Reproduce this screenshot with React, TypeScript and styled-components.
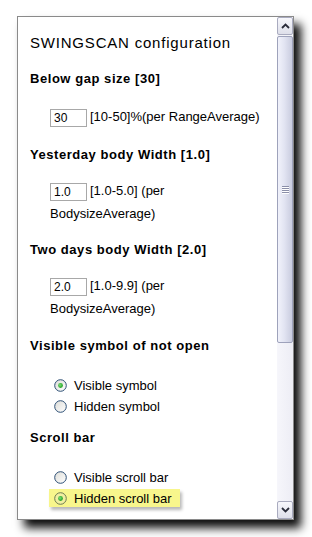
import React from "react";
import styled, { createGlobalStyle } from "styled-components";

const Global = createGlobalStyle`
  html, body { margin: 0; padding: 0; background: #fff; }
  body { font-family: "Liberation Sans", Arial, sans-serif; color: #000; }
`;

const Page = styled.div`
  width: 312px;
  height: 537px;
  box-sizing: border-box;
  padding: 16px 0 0 17px;
  background: #fff;
  overflow: hidden;
`;

const Frame = styled.div`
  width: 277px;
  height: 504px;
  box-sizing: border-box;
  border: 1px solid #8a8a8a;
  background: #fff;
  display: flex;
  box-shadow: 7px 8px 9px rgba(0, 0, 0, 0.95);
`;

const Content = styled.div`
  flex: 1;
  min-width: 0;
  padding: 16px 0 0 12px;
  overflow: hidden;
`;

const Title = styled.div`
  font-size: 15px;
  line-height: 20px;
  letter-spacing: 0.8px;
  white-space: nowrap;
`;

const Section = styled.section<{ $top: number }>`
  margin-top: ${(p) => p.$top}px;
`;

const Heading = styled.div`
  font-size: 13px;
  font-weight: bold;
  line-height: 20px;
  letter-spacing: 0.55px;
  white-space: nowrap;
`;

const Body = styled.div<{ $gap: number }>`
  margin-top: ${(p) => p.$gap}px;
`;

const InputText = styled.div`
  padding-left: 20px;
  font-size: 13px;
  line-height: 23px;
  white-space: nowrap;
`;

const Field = styled.input`
  width: 37px;
  height: 18px;
  box-sizing: border-box;
  border: 1px solid #a8a8a8;
  padding: 0 0 0 3px;
  margin: 0 3px 0 0;
  font: 12px "Liberation Sans", Arial, sans-serif;
  color: #000;
  vertical-align: middle;
  outline: none;
`;

const Options = styled.div`
  display: flex;
  flex-direction: column;
  align-items: flex-start;
  gap: 3px;
  padding-left: 19px;
`;

const Option = styled.label<{ $highlight?: boolean }>`
  display: inline-flex;
  align-items: center;
  gap: 7px;
  height: 18px;
  padding: 0 8px 0 5px;
  font-size: 13px;
  white-space: nowrap;
  background: ${(p) => (p.$highlight ? "#f8f68c" : "transparent")};
  box-shadow: ${(p) =>
    p.$highlight ? "2px 3px 3px rgba(0, 0, 0, 0.28)" : "none"};
`;

const ScrollBar = styled.div`
  width: 16px;
  display: flex;
  flex-direction: column;
  background: #f4f4f9;
`;

const ScrollButton = styled.div`
  height: 18px;
  box-sizing: border-box;
  border: 1px solid #a9abbf;
  border-radius: 2px;
  background: linear-gradient(#f7f7fc, #dedfea);
  display: flex;
  align-items: center;
  justify-content: center;
`;

const Thumb = styled.div`
  height: 307px;
  margin-top: 1px;
  box-sizing: border-box;
  border: 1px solid #9ea2bb;
  border-radius: 2px;
  background: linear-gradient(to right, #f1f2fb, #e2e4f2 45%, #c9ccdf);
  display: flex;
  align-items: center;
  justify-content: center;
`;

const Track = styled.div`
  flex: 1;
  background: linear-gradient(to right, #f6f6fb, #ededf5);
`;

const Grip = styled.div`
  width: 7px;
  display: flex;
  flex-direction: column;
  gap: 1px;
  & > span {
    height: 1px;
    background: #8b8fa9;
    box-shadow: 0 1px 0 #fff;
  }
`;

const Chevron = ({ up }: { up?: boolean }) => (
  <svg width="9" height="6" viewBox="0 0 9 6">
    <path
      d={up ? "M1 5 L4.5 1.5 L8 5" : "M1 1 L4.5 4.5 L8 1"}
      fill="none"
      stroke="#2a2c3a"
      strokeWidth="1.8"
    />
  </svg>
);

const Radio = ({ checked, tinted }: { checked?: boolean; tinted?: boolean }) => (
  <svg width="13" height="13" viewBox="0 0 13 13">
    <defs>
      <linearGradient id="rfill" x1="0" y1="0" x2="1" y2="1">
        <stop offset="0" stopColor="#dcdcd7" />
        <stop offset="1" stopColor="#ffffff" />
      </linearGradient>
      <radialGradient id="rdot" cx="0.4" cy="0.4" r="0.6">
        <stop offset="0" stopColor="#7de07a" />
        <stop offset="1" stopColor="#21a121" />
      </radialGradient>
    </defs>
    <circle
      cx="6.5"
      cy="6.5"
      r="5.8"
      fill={tinted ? "#f1efa0" : "url(#rfill)"}
      stroke={tinted ? "#6c7a52" : "#2d4f75"}
      strokeWidth="1"
    />
    {checked && <circle cx="6.5" cy="6.5" r="2.4" fill="url(#rdot)" />}
  </svg>
);

export default function App() {
  return (
    <>
      <Global />
      <Page>
        <Frame>
          <Content>
            <Title>SWINGSCAN configuration</Title>

            <Section $top={16}>
              <Heading>Below gap size [30]</Heading>
              <Body $gap={16}>
                <InputText>
                  <Field defaultValue="30" />
                  [10-50]%(per RangeAverage)
                </InputText>
              </Body>
            </Section>

            <Section $top={17}>
              <Heading>Yesterday body Width [1.0]</Heading>
              <Body $gap={14}>
                <InputText>
                  <Field defaultValue="1.0" />
                  [1.0-5.0] (per
                  <br />
                  BodysizeAverage)
                </InputText>
              </Body>
            </Section>

            <Section $top={15}>
              <Heading>Two days body Width [2.0]</Heading>
              <Body $gap={14}>
                <InputText>
                  <Field defaultValue="2.0" />
                  [1.0-9.9] (per
                  <br />
                  BodysizeAverage)
                </InputText>
              </Body>
            </Section>

            <Section $top={16}>
              <Heading>Visible symbol of not open</Heading>
              <Body $gap={20}>
                <Options>
                  <Option>
                    <Radio checked />
                    Visible symbol
                  </Option>
                  <Option>
                    <Radio />
                    Hidden symbol
                  </Option>
                </Options>
              </Body>
            </Section>

            <Section $top={13}>
              <Heading>Scroll bar</Heading>
              <Body $gap={20}>
                <Options>
                  <Option>
                    <Radio />
                    Visible scroll bar
                  </Option>
                  <Option $highlight>
                    <Radio checked tinted />
                    Hidden scroll bar
                  </Option>
                </Options>
              </Body>
            </Section>
          </Content>

          <ScrollBar>
            <ScrollButton>
              <Chevron up />
            </ScrollButton>
            <Thumb>
              <Grip>
                <span />
                <span />
                <span />
                <span />
              </Grip>
            </Thumb>
            <Track />
            <ScrollButton>
              <Chevron />
            </ScrollButton>
          </ScrollBar>
        </Frame>
      </Page>
    </>
  );
}
